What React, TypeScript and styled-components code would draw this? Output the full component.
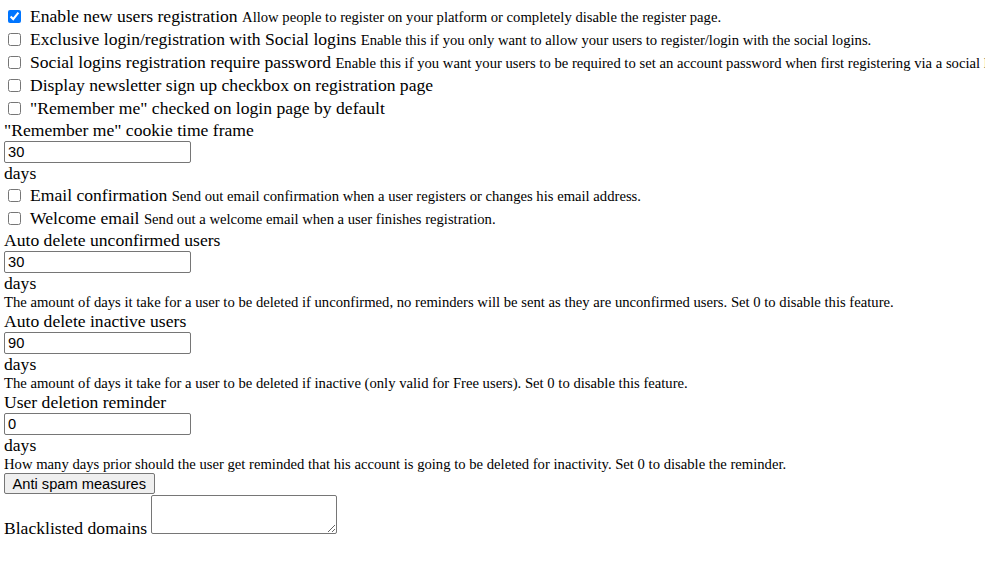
import React from 'react';
import styled, { createGlobalStyle } from 'styled-components';

const GlobalStyle = createGlobalStyle`
  html, body {
    margin: 0;
    background: #ffffff;
    overflow-x: hidden;
  }
  body {
    font-family: "Liberation Serif", "Times New Roman", serif;
    color: #000000;
  }
`;

const Form = styled.form`
  padding: 5px 4px;
  font-size: 17.6px;
`;

const CheckRow = styled.div`
  display: flex;
  align-items: center;
  height: 23px;
  white-space: nowrap;
`;

const Checkbox = styled.input.attrs({ type: 'checkbox' })`
  width: 13px;
  height: 13px;
  margin: 0 9px 0 4px;
  flex-shrink: 0;
`;

const CheckText = styled.span`
  line-height: 21px;
`;

const Hint = styled.small`
  font-size: 14.67px;
`;

const FieldLabel = styled.label`
  display: block;
  line-height: 21px;
`;

const NumberInput = styled.input`
  display: block;
  box-sizing: border-box;
  width: 187px;
  height: 22px;
  margin: 0;
  padding: 1px 3px;
  border: 1px solid #767676;
  border-radius: 2px;
  font-family: "Liberation Sans", Arial, sans-serif;
  font-size: 14.67px;
  color: #000000;
`;

const Unit = styled.div`
  line-height: 21px;
`;

const FieldHint = styled.div`
  font-size: 14.67px;
  line-height: 17px;
`;

const Button = styled.button`
  display: block;
  box-sizing: border-box;
  height: 21px;
  margin: 0;
  padding: 0 7.5px;
  background: #efefef;
  border: 1px solid #767676;
  border-radius: 2px;
  font-family: "Liberation Sans", Arial, sans-serif;
  font-size: 14.67px;
  color: #000000;
`;

const TextareaRow = styled.div`
  display: flex;
  align-items: flex-end;
  margin-top: 1px;
`;

const TextareaLabel = styled.label`
  line-height: 21px;
  margin-bottom: -5px;
`;

const TextArea = styled.textarea`
  box-sizing: border-box;
  width: 186px;
  height: 39px;
  margin: 0 0 0 4px;
  border: 1px solid #767676;
  border-radius: 2px;
`;

type CheckItem = { label: string; hint?: string; checked?: boolean };

const topChecks: CheckItem[] = [
  {
    label: 'Enable new users registration',
    hint: 'Allow people to register on your platform or completely disable the register page.',
    checked: true,
  },
  {
    label: 'Exclusive login/registration with Social logins',
    hint: 'Enable this if you only want to allow your users to register/login with the social logins.',
  },
  {
    label: 'Social logins registration require password',
    hint: 'Enable this if you want your users to be required to set an account password when first registering via a social login.',
  },
  { label: 'Display newsletter sign up checkbox on registration page' },
  { label: '"Remember me" checked on login page by default' },
];

const emailChecks: CheckItem[] = [
  {
    label: 'Email confirmation',
    hint: 'Send out email confirmation when a user registers or changes his email address.',
  },
  {
    label: 'Welcome email',
    hint: 'Send out a welcome email when a user finishes registration.',
  },
];

const CheckList: React.FC<{ items: CheckItem[] }> = ({ items }) => (
  <>
    {items.map((item) => (
      <CheckRow key={item.label}>
        <Checkbox defaultChecked={item.checked} />
        <CheckText>
          {item.label}
          {item.hint && <> <Hint>{item.hint}</Hint></>}
        </CheckText>
      </CheckRow>
    ))}
  </>
);

const DaysField: React.FC<{ label: string; value: string; hint?: string }> = ({ label, value, hint }) => (
  <>
    <FieldLabel>{label}</FieldLabel>
    <NumberInput type="text" defaultValue={value} />
    <Unit>days</Unit>
    {hint && <FieldHint>{hint}</FieldHint>}
  </>
);

const App: React.FC = () => {
  return (
    <>
      <GlobalStyle />
      <Form onSubmit={(e) => e.preventDefault()}>
        <CheckList items={topChecks} />
        <DaysField label={'"Remember me" cookie time frame'} value="30" />
        <CheckList items={emailChecks} />
        <DaysField
          label="Auto delete unconfirmed users"
          value="30"
          hint="The amount of days it take for a user to be deleted if unconfirmed, no reminders will be sent as they are unconfirmed users. Set 0 to disable this feature."
        />
        <DaysField
          label="Auto delete inactive users"
          value="90"
          hint="The amount of days it take for a user to be deleted if inactive (only valid for Free users). Set 0 to disable this feature."
        />
        <DaysField
          label="User deletion reminder"
          value="0"
          hint="How many days prior should the user get reminded that his account is going to be deleted for inactivity. Set 0 to disable the reminder."
        />
        <Button type="button">Anti spam measures</Button>
        <TextareaRow>
          <TextareaLabel>Blacklisted domains</TextareaLabel>
          <TextArea />
        </TextareaRow>
      </Form>
    </>
  );
};

export default App;
